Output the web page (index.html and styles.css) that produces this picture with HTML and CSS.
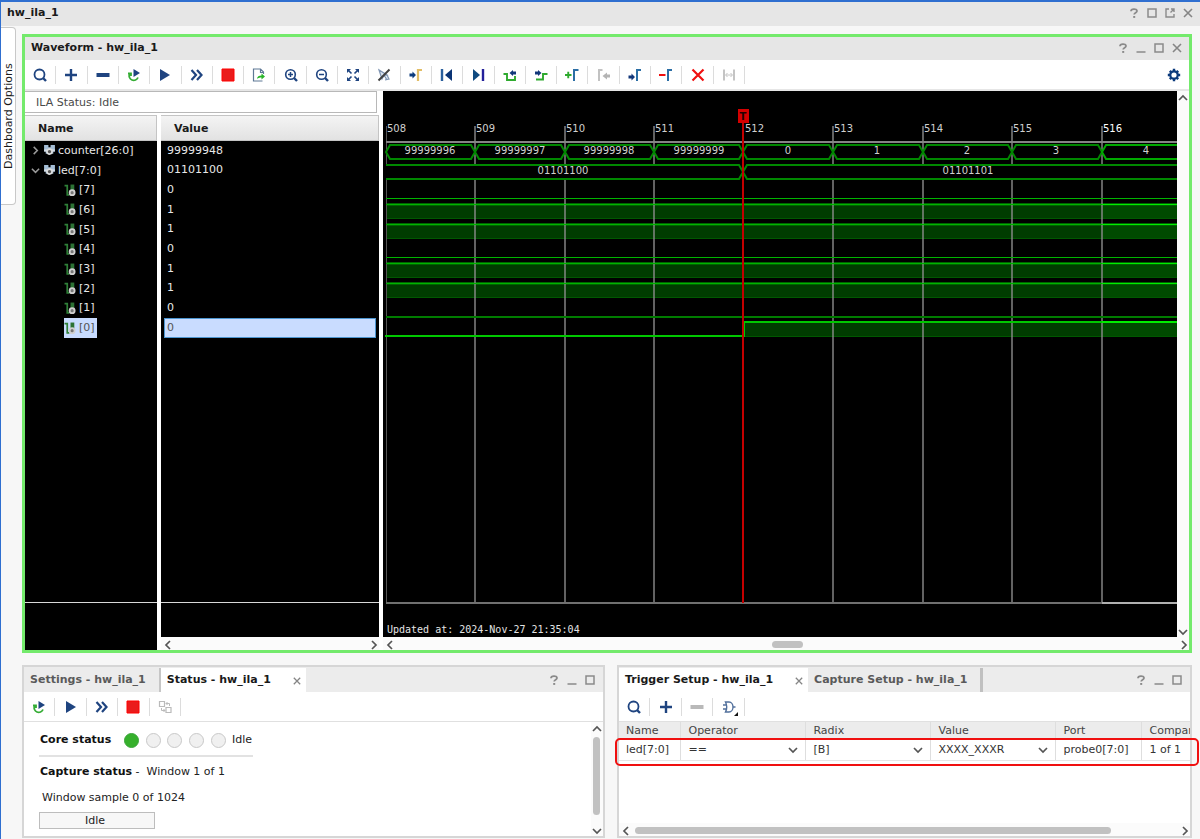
FILE: index.html
```html
<!DOCTYPE html>
<html lang="en">
<head>
<meta charset="utf-8">
<title>hw_ila_1</title>
<link rel="stylesheet" href="styles.css">
</head>
<body>

<!-- icon sprite -->
<svg class="sprite" aria-hidden="true">
  <symbol id="i-search" viewBox="0 0 16 16"><circle cx="7.500" cy="7.500" r="5" fill="none" stroke="#1f4480" stroke-width="1.800"/><path d="M11 11l3 3" stroke="#1f4480" stroke-width="2.400"/></symbol>
  <symbol id="i-plus" viewBox="0 0 16 16"><path d="M8 2v12M2 8h12" stroke="#1f4480" stroke-width="2.4"/></symbol>
  <symbol id="i-minus" viewBox="0 0 16 16"><path d="M1.5 8h13" stroke="currentColor" stroke-width="4"/></symbol>
  <symbol id="i-rerun" viewBox="0 0 16 16"><path d="M2 6.500H5V9M3.500 7A4.500 4.500 0 1 0 12 10.500" fill="none" stroke="#35ad35" stroke-width="1.800"/><path d="M7.500 2v8l6.500-4z" fill="#1f4480"/></symbol>
  <symbol id="i-run" viewBox="0 0 16 16"><path d="M3 2v12l10-6z" fill="#1f4480"/></symbol>
  <symbol id="i-ffwd" viewBox="0 0 16 16"><path d="M2.500 3l4.500 5-4.500 5M8 3l4.500 5L8 13" fill="none" stroke="#1f4480" stroke-width="2.200"/></symbol>
  <symbol id="i-stop" viewBox="0 0 16 16"><path d="M2 2h12v12H2z" fill="#ea1c1c" stroke="#f00"/></symbol>
  <symbol id="i-export" viewBox="0 0 16 16"><path d="M12.500 7V5L9.500 2h-7v12h9M9.500 2v3.500h3" fill="none" stroke="#5e7896" stroke-width="1.200"/><path d="M6 12c0-2.500 2-3.500 4.500-3.500V6.500L14 9.500l-3.500 3v-2C8.500 10.500 7 11 6 12z" fill="#28b428"/></symbol>
  <symbol id="i-zoomin" viewBox="0 0 16 16"><circle cx="7.500" cy="7.500" r="4.800" fill="none" stroke="#1f4480" stroke-width="1.600"/><path d="M11 11l3 3" stroke="#1f4480" stroke-width="2.400"/><path d="M5 7.500h5M7.500 5v5" stroke="#1f4480" stroke-width="1.500"/></symbol>
  <symbol id="i-zoomout" viewBox="0 0 16 16"><circle cx="7.500" cy="7.500" r="4.800" fill="none" stroke="#1f4480" stroke-width="1.600"/><path d="M11 11l3 3" stroke="#1f4480" stroke-width="2.400"/><path d="M5 7.500h5" stroke="#1f4480" stroke-width="1.500"/></symbol>
  <symbol id="i-fit" viewBox="0 0 16 16"><path d="M2 2h4L2 6zM14 2h-4l4 4zM2 14h4l-4-4zM14 14h-4l4-4z" fill="#1f4480"/><path d="M3 3l3.500 3.500M13 3L9.500 6.500M3 13l3.500-3.500M13 13L9.500 9.500" stroke="#1f4480" stroke-width="1.600"/></symbol>
  <symbol id="i-nocursor" viewBox="0 0 16 16"><path d="M3 3l3 9 2-3.500L11 8zM8 8l3 5M11 8l2 4-4 1" fill="#dce6f2" stroke="#8196b4" stroke-width="1.200"/><path d="M13.500 2.500L2.500 13.500" stroke="#404040" stroke-width="1.900"/></symbol>
  <symbol id="i-gocursor" viewBox="0 0 16 16"><path d="M1.500 6.500h3V4.500L8 8l-3.500 3.500v-2h-3z" fill="#0b3a7c"/><path d="M14 3h-4v11" fill="none" stroke="#e2bd66" stroke-width="2.200"/></symbol>
  <symbol id="i-first" viewBox="0 0 16 16"><path d="M3 2v12" stroke="#2a5f9c" stroke-width="2.400"/><path d="M13 2v12L6 8z" fill="#0b3475"/></symbol>
  <symbol id="i-last" viewBox="0 0 16 16"><path d="M13 2v12" stroke="#23209a" stroke-width="2.400"/><path d="M3 2v12l7-6z" fill="#0f4a80"/></symbol>
  <symbol id="i-prevtr" viewBox="0 0 16 16"><path d="M1.500 7H5v6h8V9" fill="none" stroke="#2faa2f" stroke-width="1.900"/><path d="M14 4.500h-3V3L7.500 6l3.500 3V7.500h3z" fill="#12377a"/></symbol>
  <symbol id="i-nexttr" viewBox="0 0 16 16"><path d="M3 12.500h7V7h4.500" fill="none" stroke="#2faa2f" stroke-width="1.900"/><path d="M2 4.500h3V3l3.500 3L5 9V7.500H2z" fill="#12377a"/></symbol>
  <symbol id="i-addmark" viewBox="0 0 16 16"><path d="M1 8h6.500M4.250 4.750v6.500" stroke="#2faa2f" stroke-width="1.900"/><path d="M14.500 3H10v11" fill="none" stroke="#2b6ea5" stroke-width="2"/></symbol>
  <symbol id="i-prevmark" viewBox="0 0 16 16"><path d="M6.500 3H3v11" fill="none" stroke="#c2c2c2" stroke-width="2"/><path d="M14 7.500h-3V5.500L6.500 9l4.500 3.500v-2h3z" fill="#b4b4b4"/></symbol>
  <symbol id="i-nextmark" viewBox="0 0 16 16"><path d="M1.500 8.500h3V6.500L8 10l-3.500 3.500v-2h-3z" fill="#12377a"/><path d="M14 3h-4v11" fill="none" stroke="#2b6ea5" stroke-width="2"/></symbol>
  <symbol id="i-delmark" viewBox="0 0 16 16"><path d="M1 8h6.500" stroke="#f01010" stroke-width="2"/><path d="M14 3h-4v11" fill="none" stroke="#2b6ea5" stroke-width="2"/></symbol>
  <symbol id="i-delall" viewBox="0 0 16 16"><path d="M2.500 2.500l11 11M13.500 2.500l-11 11" stroke="#f01010" stroke-width="2.200"/></symbol>
  <symbol id="i-span" viewBox="0 0 16 16"><path d="M3 2.500v11M13 2.500v11" stroke="#c4c4c4" stroke-width="2"/><path d="M5 8h6M6.500 6L4.500 8l2 2M9.500 6l2 2-2 2" fill="none" stroke="#c4c4c4"/></symbol>
  <symbol id="i-swap" viewBox="0 0 16 16"><path d="M2.500 2.500h5v5h-5zM9 8.500h5v5H9z" fill="none" stroke="#bababa" stroke-width="1.200"/><path d="M9 4.500h3.500v2.500M10.500 3L9 4.500 10.500 6M4.500 9v2.500H8M6.500 10L8 11.500 6.500 13" fill="none" stroke="#bababa"/></symbol>
  <symbol id="i-gate" viewBox="0 0 16 16"><path d="M4.500 3H8c2.500 0 4 2.500 4 5s-1.500 5-4 5H4.500c1.500-3 1.500-7 0-10zM12 8h2.500M2 6h3.500M2 10h3.500" fill="none" stroke="#52709c" stroke-width="1.400"/></symbol>
  <symbol id="i-gear" viewBox="0 0 16 16"><path d="M8 1.800v12.400M1.800 8h12.400M3.800 3.800l8.400 8.400M12.200 3.800l-8.400 8.400" stroke="#0b3a7c" stroke-width="2.400"/><circle cx="8" cy="8" r="3.700" fill="#fff" stroke="#0b3a7c" stroke-width="2.200"/></symbol>
  <symbol id="i-help" viewBox="0 0 10 10"><path d="M2 3.200C2 .4 8 .3 8 3c0 1.800-2.800 1.700-2.800 3.600" fill="none" stroke="#8a8a8a" stroke-width="1.800"/><path d="M4.200 8h2v1.900h-2z" fill="#8a8a8a"/></symbol>
  <symbol id="i-min" viewBox="0 0 10 10"><path d="M.5 9h9" stroke="#8a8a8a" stroke-width="1.500"/></symbol>
  <symbol id="i-max" viewBox="0 0 10 10"><path d="M1 1h8v8H1z" fill="none" stroke="#8a8a8a" stroke-width="1.500"/></symbol>
  <symbol id="i-float" viewBox="0 0 10 10"><path d="M4 1H1v8h8V6M6 1h3v3M9 1L5.500 4.500" fill="none" stroke="#8a8a8a" stroke-width="1.400"/></symbol>
  <symbol id="i-close" viewBox="0 0 10 10"><path d="M1 1l8 8M9 1L1 9" stroke="#858585" stroke-width="1.600"/></symbol>
  <symbol id="i-up" viewBox="0 0 10 10"><path d="M1 7l4-4 4 4" fill="none" stroke="currentColor" stroke-width="1.700"/></symbol>
  <symbol id="i-down" viewBox="0 0 10 10"><path d="M1 3l4 4 4-4" fill="none" stroke="currentColor" stroke-width="1.700"/></symbol>
  <symbol id="i-left" viewBox="0 0 10 10"><path d="M7 1L3 5l4 4" fill="none" stroke="currentColor" stroke-width="1.700"/></symbol>
  <symbol id="i-right" viewBox="0 0 10 10"><path d="M3 1l4 4-4 4" fill="none" stroke="currentColor" stroke-width="1.700"/></symbol>
  <symbol id="i-bus" viewBox="0 0 12 12"><path d="M1 1h4v2h2V1h4v6H9.500v2h-7V7H1z" fill="#a5bed6"/><path d="M1 5h3v2H1zM8 5h3v2H8z" fill="#d5dde6"/><circle cx="6" cy="7" r="2.300" fill="#555" stroke="#dcdcdc" stroke-width="1.500"/></symbol>
  <symbol id="i-bit" viewBox="0 0 12 12"><path d="M.5 1.500H3V10h2" fill="none" stroke="#2f8038" stroke-width="1.600"/><path d="M6 .5h3.500v7H6z" fill="#2c7234"/><circle cx="7.500" cy="8" r="2.300" fill="#777" stroke="#d0d0d0" stroke-width="1.700"/></symbol>
</svg>

<header class="titlebar">
  <h1>hw_ila_1</h1>
  <div class="win-btns">
    <button aria-label="Help"><svg><use href="#i-help"/></svg></button>
    <button aria-label="Maximize"><svg><use href="#i-max"/></svg></button>
    <button aria-label="Float"><svg><use href="#i-float"/></svg></button>
    <button aria-label="Close"><svg><use href="#i-close"/></svg></button>
  </div>
</header>

<div class="main">
  <button class="side-tab">Dashboard Options</button>

  <div class="content">

    <section class="waveform">
      <div class="panel-head">
        <h2>Waveform - hw_ila_1</h2>
        <div class="win-btns">
          <button aria-label="Help"><svg><use href="#i-help"/></svg></button>
          <button aria-label="Minimize"><svg><use href="#i-min"/></svg></button>
          <button aria-label="Maximize"><svg><use href="#i-max"/></svg></button>
          <button aria-label="Close"><svg><use href="#i-close"/></svg></button>
        </div>
      </div>

      <div class="toolbar">
        <div class="tools tools-wave">
          <button aria-label="Search"><svg><use href="#i-search"/></svg></button>
          <button aria-label="Add probes"><svg><use href="#i-plus"/></svg></button>
          <button aria-label="Remove probes"><svg><use href="#i-minus"/></svg></button>
          <button aria-label="Auto re-trigger"><svg><use href="#i-rerun"/></svg></button>
          <button aria-label="Run trigger"><svg><use href="#i-run"/></svg></button>
          <button aria-label="Run trigger immediate"><svg><use href="#i-ffwd"/></svg></button>
          <button aria-label="Stop trigger"><svg><use href="#i-stop"/></svg></button>
          <button aria-label="Export data"><svg><use href="#i-export"/></svg></button>
          <button aria-label="Zoom in"><svg><use href="#i-zoomin"/></svg></button>
          <button aria-label="Zoom out"><svg><use href="#i-zoomout"/></svg></button>
          <button aria-label="Zoom fit"><svg><use href="#i-fit"/></svg></button>
          <button aria-label="Cursor"><svg><use href="#i-nocursor"/></svg></button>
          <button aria-label="Go to cursor"><svg><use href="#i-gocursor"/></svg></button>
          <button aria-label="Go to start"><svg><use href="#i-first"/></svg></button>
          <button aria-label="Go to end"><svg><use href="#i-last"/></svg></button>
          <button aria-label="Previous transition"><svg><use href="#i-prevtr"/></svg></button>
          <button aria-label="Next transition"><svg><use href="#i-nexttr"/></svg></button>
          <button aria-label="Add marker"><svg><use href="#i-addmark"/></svg></button>
          <button aria-label="Previous marker" disabled><svg><use href="#i-prevmark"/></svg></button>
          <button aria-label="Next marker"><svg><use href="#i-nextmark"/></svg></button>
          <button aria-label="Remove marker"><svg><use href="#i-delmark"/></svg></button>
          <button aria-label="Remove all markers"><svg><use href="#i-delall"/></svg></button>
          <button aria-label="Swap cursors" disabled><svg><use href="#i-span"/></svg></button>
        </div>
        <button class="gear" aria-label="Settings"><svg><use href="#i-gear"/></svg></button>
      </div>

      <div class="wave-body">
        <div class="signals">
          <div class="ila-status">ILA Status: Idle</div>
          <div class="columns">
            <div class="column names">
              <div class="col-head">Name</div>
              <ul class="rows">
                <li><svg class="arrow"><use href="#i-right"/></svg><svg class="sig"><use href="#i-bus"/></svg>counter[26:0]</li>
                <li><svg class="arrow"><use href="#i-down"/></svg><svg class="sig"><use href="#i-bus"/></svg>led[7:0]</li>
                <li class="bit"><span><svg class="sig"><use href="#i-bit"/></svg>[7]</span></li>
                <li class="bit"><span><svg class="sig"><use href="#i-bit"/></svg>[6]</span></li>
                <li class="bit"><span><svg class="sig"><use href="#i-bit"/></svg>[5]</span></li>
                <li class="bit"><span><svg class="sig"><use href="#i-bit"/></svg>[4]</span></li>
                <li class="bit"><span><svg class="sig"><use href="#i-bit"/></svg>[3]</span></li>
                <li class="bit"><span><svg class="sig"><use href="#i-bit"/></svg>[2]</span></li>
                <li class="bit"><span><svg class="sig"><use href="#i-bit"/></svg>[1]</span></li>
                <li class="bit selected"><span><svg class="sig"><use href="#i-bit"/></svg>[0]</span></li>
              </ul>
              <div class="col-foot"></div>
            </div>
            <div class="column values">
              <div class="col-head">Value</div>
              <ul class="rows">
                <li>99999948</li>
                <li>01101100</li>
                <li>0</li>
                <li>1</li>
                <li>1</li>
                <li>0</li>
                <li>1</li>
                <li>1</li>
                <li>0</li>
                <li class="selected">0</li>
              </ul>
              <div class="col-foot"></div>
              <div class="hscroll">
                <svg><use href="#i-left"/></svg><svg><use href="#i-right"/></svg>
              </div>
            </div>
          </div>
        </div>

        <div class="wave">
          <div class="wave-view">
            <svg class="plot" role="img" aria-label="Waveform of counter and led">
              <!-- filled high levels -->
              <g class="fill">
                <path d="M3 114H3000V128H3zM3 134H3000V148H3zM3 173H3000V187H3zM3 192H3000V207H3zM361 231H3000V246H361z"/>
                <path class="hot" d="M719 114H3000V128H719zM719 134H3000V148H719zM719 173H3000V187H719zM719 192H3000V207H719zM719 231H3000V246H719z"/>
              </g>
              <path class="base" d="M3 127.500H3000M3 147.500H3000M3 186.500H3000M3 206.500H3000M361 245.500H3000"/>
              <path class="glow" d="M3 113.500H3000M3 133.500H3000M3 172.500H3000M3 192.500H3000"/>

              <!-- time grid -->
              <path class="grid" d="M92 35V512M182 35V512M271 35V512M450 35V512M540 35V512M629 35V512M719 35V512"/>
              <path class="edge" d="M3.500 35V512"/>
              <rect x="3" y="50" width="100%" height="2" fill="#858585"/>
              <rect x="3" y="511" width="100%" height="2" fill="#707070"/>
              <rect x="719" y="511" width="100%" height="2" fill="#b0b0b0"/>

              <!-- bit levels -->
              <path class="level" d="M3 107.500H3000M3 113.500H3000M3 133.500H3000M3 166.500H3000M3 172.500H3000M3 192.500H3000"/>
              <path class="level dim" d="M3 226H3000"/>
              <path class="level sel" d="M2 245H361V231H3000"/>
              <path class="level hot" d="M719 113.500H3000M719 133.500H3000M719 172.500H3000M719 192.500H3000"/>
              <path class="level sel hot" d="M719 231H3000"/>

              <!-- buses -->
              <g class="bus">
                <path d="M3 61l4-7H88l4 7-4 7H7z"/>
                <path d="M92 61l4-7h82l4 7-4 7H96z"/>
                <path d="M182 61l4-7h81l4 7-4 7h-81z"/>
                <path d="M271 61l4-7h81l4 7-4 7h-81z"/>
                <path d="M360 61l4-7h82l4 7-4 7h-82z"/>
                <path d="M450 61l4-7h82l4 7-4 7h-82z"/>
                <path d="M540 61l4-7h81l4 7-4 7h-81z"/>
                <path d="M629 61l4-7h82l4 7-4 7h-82z"/>
                <path class="hot" d="M3000 54H723l-4 7 4 7H3000"/>
                <path d="M3 74H356l4 7-4 7H3"/>
                <path d="M3000 74H364l-4 7 4 7H3000"/>
              </g>

              <!-- trigger marker -->
              <path d="M360 20V512" stroke="#c40000" stroke-width="2"/>
              <path d="M355 18h11v14h-11z" fill="#d40000"/>
              <text x="360" y="29" class="mark">T</text>

              <g class="ticks">
                <text x="4" y="41">508</text>
                <text x="93" y="41">509</text>
                <text x="183" y="41">510</text>
                <text x="272" y="41">511</text>
                <text x="362" y="41">512</text>
                <text x="451" y="41">513</text>
                <text x="541" y="41">514</text>
                <text x="630" y="41">515</text>
                <text x="720" y="41" class="hot">516</text>
              </g>
              <g class="data">
                <text x="47" y="63">99999996</text>
                <text x="137" y="63">99999997</text>
                <text x="226" y="63">99999998</text>
                <text x="316" y="63">99999999</text>
                <text x="405" y="63">0</text>
                <text x="494" y="63">1</text>
                <text x="584" y="63">2</text>
                <text x="673" y="63">3</text>
                <text x="763" y="63">4</text>
                <text x="180" y="83">01101100</text>
                <text x="585" y="83">01101101</text>
              </g>
              <text x="4" y="542" class="stamp">Updated at: 2024-Nov-27 21:35:04</text>
            </svg>
            <div class="vscroll">
              <svg><use href="#i-up"/></svg><svg><use href="#i-down"/></svg>
            </div>
          </div>
          <div class="hscroll">
            <svg><use href="#i-left"/></svg><i class="thumb thumb-wave"></i><svg><use href="#i-right"/></svg>
          </div>
        </div>
      </div>
    </section>

    <div class="bottom">
      <section class="panel status">
        <div class="tabs">
          <button class="tab tab-settings">Settings - hw_ila_1</button>
          <button class="tab active">Status - hw_ila_1 <svg><use href="#i-close"/></svg></button>
          <div class="win-btns">
            <button aria-label="Help"><svg><use href="#i-help"/></svg></button>
            <button aria-label="Minimize"><svg><use href="#i-min"/></svg></button>
            <button aria-label="Maximize"><svg><use href="#i-max"/></svg></button>
          </div>
        </div>
        <div class="toolbar">
          <div class="tools tools-status">
            <button aria-label="Auto re-trigger"><svg><use href="#i-rerun"/></svg></button>
            <button aria-label="Run trigger"><svg><use href="#i-run"/></svg></button>
            <button aria-label="Run trigger immediate"><svg><use href="#i-ffwd"/></svg></button>
            <button aria-label="Stop trigger"><svg><use href="#i-stop"/></svg></button>
            <button aria-label="Swap" disabled><svg><use href="#i-swap"/></svg></button>
          </div>
        </div>
        <div class="status-body">
          <div class="status-info">
            <div class="core">
              <b>Core status</b>
              <div class="leds"><i class="on"></i><i></i><i></i><i></i><i></i></div>
              <span>Idle</span>
            </div>
            <div class="capture"><b>Capture status</b> -&nbsp; Window 1 of 1</div>
            <div class="sample">Window sample 0 of 1024</div>
            <div class="progress">Idle</div>
          </div>
          <div class="vscroll">
            <svg><use href="#i-up"/></svg><i class="thumb"></i><svg><use href="#i-down"/></svg>
          </div>
        </div>
      </section>

      <section class="panel trigger">
        <div class="tabs">
          <button class="tab active">Trigger Setup - hw_ila_1 <svg><use href="#i-close"/></svg></button>
          <button class="tab tab-capture">Capture Setup - hw_ila_1</button>
          <div class="win-btns">
            <button aria-label="Help"><svg><use href="#i-help"/></svg></button>
            <button aria-label="Minimize"><svg><use href="#i-min"/></svg></button>
            <button aria-label="Maximize"><svg><use href="#i-max"/></svg></button>
          </div>
        </div>
        <div class="toolbar">
          <div class="tools tools-trigger">
            <button aria-label="Search"><svg><use href="#i-search"/></svg></button>
            <button aria-label="Add probe"><svg><use href="#i-plus"/></svg></button>
            <button aria-label="Remove probe" disabled><svg><use href="#i-minus"/></svg></button>
            <button class="has-menu" aria-label="Trigger condition"><svg><use href="#i-gate"/></svg></button>
          </div>
        </div>
        <div class="trigger-body">
          <div class="table-wrap">
            <table>
              <colgroup><col class="c-name"><col class="c-pick"><col class="c-pick"><col class="c-pick"><col class="c-port"><col></colgroup>
              <thead>
                <tr><th>Name</th><th>Operator</th><th>Radix</th><th>Value</th><th>Port</th><th>Compare</th></tr>
              </thead>
              <tbody>
                <tr>
                  <td>led[7:0]</td>
                  <td><select aria-label="Operator"><option>==</option></select></td>
                  <td><select aria-label="Radix"><option>[B]</option></select></td>
                  <td><select aria-label="Value"><option>XXXX_XXXR</option></select></td>
                  <td>probe0[7:0]</td>
                  <td>1 of 1</td>
                </tr>
              </tbody>
            </table>
          </div>
          <div class="hscroll">
            <svg><use href="#i-left"/></svg><i class="thumb thumb-table"></i><svg><use href="#i-right"/></svg>
          </div>
          <div class="highlight"></div>
        </div>
      </section>
    </div>

  </div>
</div>

</body>
</html>
```
FILE: styles.css
```css
/* styles.css */

* {
  box-sizing: border-box;
}
body {
  margin: 0;
  min-height: 100vh;
  display: flex;
  flex-direction: column;
  background: #f7f7f7;
  border-top: 2px solid #2f6fd0;
  border-left: 1px solid #2f6fd0;
  font: 11px/16px "DejaVu Sans", sans-serif;
  color: #222;
}
h1, h2 {
  margin: 0;
  font-size: 11px;
  line-height: 16px;
  color: #1a1a1a;
}
button, select {
  margin: 0;
  padding: 0;
  border: 0;
  background: none;
  font: inherit;
  color: inherit;
}
ul {
  margin: 0;
  padding: 0;
  list-style: none;
}
svg {
  display: block;
  flex: none;
}
.sprite {
  position: absolute;
  width: 0;
  height: 0;
}

/* title bars */
.titlebar, .panel-head {
  display: flex;
  align-items: center;
  justify-content: space-between;
  background: #e6e6e6;
}
.titlebar {
  height: 24px;
  padding: 0 7px 2px 6px;
}
.panel-head {
  height: 23px;
  padding: 0 7px 1px 6px;
}
.win-btns {
  display: flex;
  align-items: center;
  gap: 8px;
}
.win-btns svg {
  width: 10px;
  height: 10px;
}

.main {
  flex: 1;
  display: flex;
}
/* turned half round, so its left side is the one drawn on the right */
.side-tab {
  width: 15px;
  height: 178px;
  margin-top: 1px;
  background: #fff;
  border: 1px solid #c8c8c8;
  border-right: 0;
  border-radius: 4px 0 0 4px;
  writing-mode: vertical-rl;
  transform: rotate(180deg);
  line-height: 13px;
  color: #1a1a1a;
}
.content {
  flex: 1;
  min-width: 0;
  display: flex;
  flex-direction: column;
  gap: 12px;
  padding: 8px 8px 1px 6px;
}

/* toolbars */
.toolbar {
  display: flex;
  justify-content: space-between;
  align-items: center;
  height: 30px;
  background: #fff;
  border-bottom: 1px solid #e0e0e0;
}
.tools {
  display: grid;
  grid-auto-flow: column;
  grid-auto-columns: 1fr;
}
.tools-wave {
  width: 720px;
}
.tools-status {
  width: 157px;
}
.tools-trigger {
  width: 126px;
}
.tools button {
  height: 18px;
  display: flex;
  align-items: center;
  justify-content: center;
  border-right: 1px solid #dcdcdc;
  color: #1f4480;
}
.tools button:disabled {
  color: #b9b9b9;
}
.toolbar svg {
  width: 16px;
  height: 16px;
}
.gear {
  padding-right: 7px;
}
.has-menu {
  position: relative;
}
.has-menu::after {
  content: "";
  position: absolute;
  right: 6px;
  bottom: 0;
  border: 2px solid #111;
  border-top-color: transparent;
  border-left-color: transparent;
}

/* waveform panel */
.waveform {
  flex: 1;
  display: flex;
  flex-direction: column;
  border: 3px solid #74ea6c;
  background: #fff;
}
.waveform .toolbar {
  height: 31px;
  border-bottom: 2px solid #e6e6e6;
}
.wave-body {
  flex: 1;
  display: flex;
  gap: 4px;
}
.signals {
  width: 354px;
  display: flex;
  flex-direction: column;
}
.ila-status {
  height: 22px;
  margin: 0 2px 2px 0;
  padding: 3px 11px;
  border: 1px solid #b8b8b8;
  border-left: 0;
  color: #4a4a4a;
}
.columns {
  flex: 1;
  display: flex;
  gap: 4px;
}
.column {
  display: flex;
  flex-direction: column;
  background: #000;
  color: #e8e8e8;
}
.names {
  width: 132px;
}
.values {
  flex: 1;
}
.col-head {
  height: 26px;
  padding: 5px 13px;
  border: 1px solid #c4c4c4;
  border-left: 0;
  background: linear-gradient(#f4f4f4, #e2e2e2);
  font-weight: bold;
  line-height: 16px;
  color: #1a1a1a;
}
/* ten signal rows share this height with the plot lanes */
.rows {
  display: grid;
  grid-template-rows: repeat(10, 1fr);
  height: 197px;
}
.rows li {
  display: flex;
  align-items: center;
  line-height: 18px;
}
.names li {
  padding-left: 6px;
}
.names .bit {
  padding-left: 39px;
}
.bit span {
  display: flex;
  align-items: center;
  height: 100%;
  padding-right: 2px;
}
.arrow {
  width: 9px;
  height: 9px;
  margin-right: 3px;
  color: #9a9a9a;
}
.sig {
  width: 13px;
  height: 13px;
  margin-right: 2px;
}
.names .selected span {
  background: #c9dcff;
  color: #555;
}
.values li {
  padding-left: 6px;
}
.values .selected {
  margin: 0 3px;
  padding-left: 2px;
  border: 1px solid #4d96d0;
  background: #c9dcff;
  color: #555;
}
.col-foot {
  margin-top: auto;
  height: 48px;
  border-top: 1px solid #d8d8d8;
}
.values .col-foot {
  height: 35px;
}

/* scroll bars */
.hscroll {
  height: 13px;
  display: flex;
  align-items: center;
  justify-content: space-between;
  padding: 2px 0 0 2px;
  background: #fbfbfb;
  color: #555;
}
.vscroll {
  width: 12px;
  display: flex;
  flex-direction: column;
  align-items: center;
  justify-content: space-between;
  background: #fbfbfb;
  color: #555;
}
.hscroll svg, .vscroll svg {
  width: 10px;
  height: 10px;
}
.thumb {
  border-radius: 4px;
  background: #c1c1c1;
}

/* plot */
.wave {
  flex: 1;
  min-width: 0;
  display: flex;
  flex-direction: column;
}
.wave-view {
  flex: 1;
  display: flex;
  background: #000;
}
.wave-view .vscroll {
  padding: 2px 0 0;
}
.plot {
  flex: 1;
  min-width: 0;
  height: 546px;
  overflow: hidden;
}
.thumb-wave {
  width: 31px;
  height: 7px;
}
.fill {
  fill: #003c00;
}
.fill .hot {
  fill: #004a00;
}
.base {
  stroke: #005800;
}
.grid {
  stroke: #8c8c8c;
  stroke-opacity: .7;
  stroke-width: 2;
}
.edge {
  stroke: #555;
}
.glow {
  stroke: #006400;
  stroke-width: 3;
}
.level {
  fill: none;
  stroke: #00b400;
}
.level.dim {
  stroke: #007c00;
  stroke-width: 2;
}
.level.sel {
  stroke: #00c800;
  stroke-width: 2;
}
.level.hot {
  stroke: #00ee00;
}
.bus path {
  fill: #000;
  stroke: #008800;
  stroke-width: 2;
}
.bus path.hot {
  stroke: #00aa00;
}
.plot text {
  font-size: 10px;
  fill: #d0d0d0;
}
.plot text.hot {
  fill: #fff;
}
.plot .data text {
  text-anchor: middle;
}
.plot .mark {
  font-weight: bold;
  fill: #200;
  text-anchor: middle;
}
.plot .stamp {
  font-family: "DejaVu Sans Mono", monospace;
  fill: #e4e4e4;
}

/* lower panels */
.bottom {
  display: flex;
  gap: 12px;
  height: 173px;
}
.panel {
  display: flex;
  flex-direction: column;
  min-width: 0;
  border: 2px solid #d6d6d6;
  background: #fff;
}
.status {
  flex: 583 1 0;
}
.trigger {
  flex: 575 1 0;
}
.tabs {
  display: flex;
  height: 25px;
  padding-top: 1px;
  background: #ececec;
}
.tab {
  display: flex;
  align-items: center;
  padding: 0 5px 1px 6px;
  font-weight: bold;
  color: #5a5a5a;
  white-space: nowrap;
}
.tab.active {
  background: #fff;
  color: #1a1a1a;
}
.tab svg {
  width: 8px;
  height: 8px;
  margin: 3px 0 0 22px;
}
.tab-settings {
  padding-right: 13px;
  border-right: 2px solid #c6c6c6;
}
.tab-capture {
  padding-right: 13px;
  border-right: 3px solid #c0c0c0;
}
.tabs .win-btns {
  margin-left: auto;
  padding-right: 8px;
}
.status-body {
  flex: 1;
  display: flex;
}
.status-info {
  flex: 1;
  padding: 9px 0 0 15px;
}
.core {
  display: flex;
  align-items: center;
  width: 214px;
  height: 26px;
  padding: 0 1px 6px;
  border-bottom: 2px solid #e2e2e2;
}
.leds {
  display: flex;
  justify-content: space-between;
  width: 102px;
  margin: 0 6px 0 auto;
}
.leds i {
  width: 15px;
  height: 15px;
  border: 1px solid #c8c8c8;
  border-radius: 50%;
  background: #f0f0f0;
}
.leds .on {
  border-color: #3aa63a;
  background: #36b02c;
}
b {
  color: #111;
}
.capture {
  padding: 7px 0 0 1px;
}
.sample {
  padding: 10px 0 0 3px;
}
.progress {
  width: 116px;
  height: 17px;
  margin-top: 6px;
  padding-right: 4px;
  border: 1px solid #bdbdbd;
  background: #f7f7f7;
  line-height: 16px;
  text-align: center;
}
.status .vscroll {
  padding: 2px 0 0;
}
.status .thumb {
  width: 7px;
  height: 78px;
  margin-bottom: 9px;
}

/* trigger table */
.trigger-body {
  position: relative;
  flex: 1;
  min-height: 0;
  display: flex;
  flex-direction: column;
}
.table-wrap {
  flex: 1;
  overflow: hidden;
}
table {
  width: 100%;
  table-layout: fixed;
  border-collapse: collapse;
}
.c-name {
  width: 62px;
}
.c-pick {
  width: 125px;
}
.c-port {
  width: 86px;
}
th, td {
  height: 18px;
  padding: 0 0 0 7px;
  border-right: 1px solid #dedede;
  font-weight: normal;
  text-align: left;
  white-space: nowrap;
  overflow: hidden;
}
th {
  background: #ececec;
  color: #444;
}
th:last-child, td:last-child {
  border-right: 0;
}
td {
  height: 20px;
  border-bottom: 1px solid #e6e6e6;
  color: #333;
}
td select {
  display: block;
  width: 100%;
  height: 18px;
  appearance: none;
  background: url("data:image/svg+xml,%3Csvg xmlns='http://www.w3.org/2000/svg' width='10' height='10'%3E%3Cpath d='M1 3l4 4 4-4' fill='none' stroke='%23555' stroke-width='1.700'/%3E%3C/svg%3E") no-repeat right 7px center;
}
.thumb-table {
  flex: 1;
  height: 7px;
  margin: 0 69px 0 4px;
}
.highlight {
  position: absolute;
  top: 16px;
  left: -4px;
  right: -9px;
  height: 28px;
  border: 2px solid #f01010;
  border-radius: 5px;
  pointer-events: none;
}
```
